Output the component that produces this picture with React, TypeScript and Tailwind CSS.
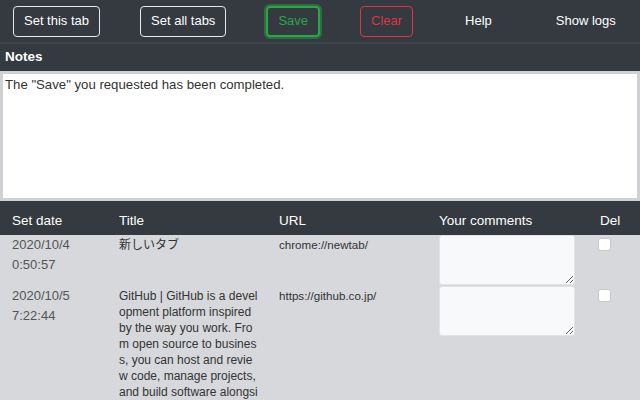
import React from "react";

type Row = {
  date: string;
  time: string;
  title: string;
  url: string;
};

const rows: Row[] = [
  { date: "2020/10/4", time: "0:50:57", title: "新しいタブ", url: "chrome://newtab/" },
  {
    date: "2020/10/5",
    time: "7:22:44",
    title:
      "GitHub | GitHub is a development platform inspired by the way you work. From open source to business, you can host and review code, manage projects, and build software alongside 50 million developers.",
    url: "https://github.co.jp/",
  },
];

const font = "font-['Liberation_Sans','Noto_Sans_CJK_JP',Arial,sans-serif]";

export default function App() {
  return (
    <div className={`h-[400px] w-[640px] overflow-hidden bg-[#d6d8db] ${font}`}>
      <div className="flex h-[42px] items-center gap-10 bg-[#343a40] pl-[13px] whitespace-nowrap">
        <button className="h-[31px] shrink-0 rounded border border-[#e6e6e6] px-[10px] text-[13px] text-white">
          Set this tab
        </button>
        <button className="h-[31px] shrink-0 rounded border border-[#e6e6e6] px-[10px] text-[13px] text-white">
          Set all tabs
        </button>
        <button className="h-[31px] shrink-0 rounded border-2 border-[#28a745] px-[10px] text-[13px] text-[#28a745] shadow-[0_0_0_2px_rgba(40,167,69,0.45)]">
          Save
        </button>
        <button className="h-[31px] shrink-0 rounded border border-[#dc3545] px-[10px] text-[13px] text-[#dc3545]">
          Clear
        </button>
        <button className="h-[31px] shrink-0 px-3 text-[13px] text-white">Help</button>
        <button className="h-[31px] shrink-0 px-3 text-[13px] text-white">Show logs</button>
      </div>
      <div className="h-[2px] bg-[#3e444b]" />
      <div className="bg-[#343a40]">
        <div className="h-[27px] pl-[5px] pt-[3px] text-[13.5px] font-bold leading-[20px] text-white">Notes</div>
        <textarea
          className="block h-[130px] w-full resize-none border-[3px] border-[#cfd1d4] bg-white px-[2px] pt-[3px] pb-[2px] text-[13.2px] leading-[15px] text-[#333]"
          defaultValue={'The "Save" you requested has been completed.'}
        />
        <div className="grid h-[34px] grid-cols-[107px_160px_160px_161px_52px] items-end pb-[4px] text-[13.5px] text-white">
          <div className="pl-3">Set date</div>
          <div className="pl-3">Title</div>
          <div className="pl-3">URL</div>
          <div className="pl-3">Your comments</div>
          <div className="pl-3">Del</div>
        </div>
      </div>
      <div>
        {rows.map((r) => (
          <div
            key={r.date + r.time}
            className="grid grid-cols-[107px_160px_160px_161px_52px] pb-[1px] text-[12px] leading-[16px] text-[#333]"
          >
            <div className="pl-3 text-[13px] leading-[20px] text-[#555]">
              <div>{r.date}</div>
              <div>{r.time}</div>
            </div>
            <div className="pl-3 pt-[2px]">
              <div className="w-[140px] break-all">{r.title}</div>
            </div>
            <div className="pl-3 pt-[2px] text-[11.6px]">{r.url}</div>
            <div className="pl-3">
              <textarea className="block h-[50px] w-[136px] rounded-[3px] border border-[#e2e3e5] bg-[#f8f9fa]" />
            </div>
            <div className="pl-[10px] pt-[3px]">
              <input type="checkbox" className="h-[13px] w-[13px] appearance-none rounded-[3px] border border-[#c8c8c8] bg-white" />
            </div>
          </div>
        ))}
      </div>
    </div>
  );
}
